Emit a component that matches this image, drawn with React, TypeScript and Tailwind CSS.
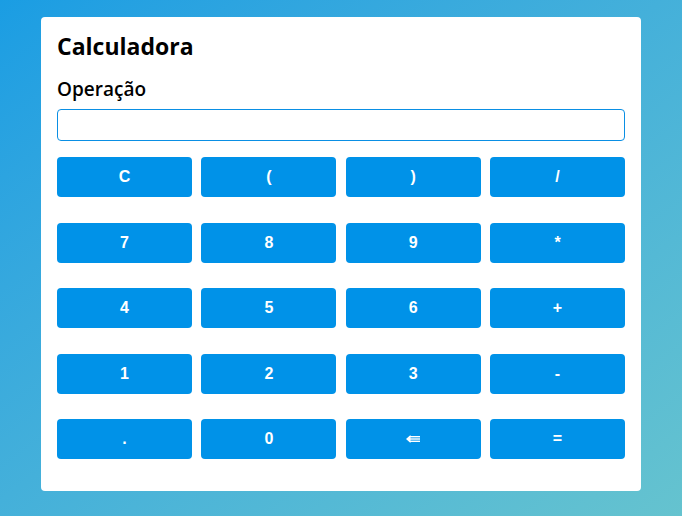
import React from "react";

const keys = ["C", "(", ")", "/", "7", "8", "9", "*", "4", "5", "6", "+", "1", "2", "3", "-", ".", "0", "⇚", "="];

export default function App() {
  return (
    <div className="min-h-screen w-full bg-linear-to-br from-[#1a9de3] to-[#65c3cf] pt-[17px]">
      <div className="mx-auto w-[600px] rounded-[4px] bg-white px-4 pt-[15px] pb-[32px]">
        <h1
          className="text-[23px] leading-[28px] font-bold text-black"
          style={{ fontFamily: '"Open Sans", "DejaVu Sans", sans-serif' }}
        >
          Calculadora
        </h1>
        <label
          className="mt-[17px] block text-[19px] leading-[24px] font-semibold text-black"
          style={{ fontFamily: '"Open Sans", "DejaVu Sans", sans-serif' }}
        >
          Operação
        </label>
        <input
          type="text"
          className="mt-[8px] block h-[32px] w-full rounded-[4px] border border-[#0a8fe4] bg-white px-2 outline-none"
        />
        <div className="mt-[16px] grid grid-cols-4 gap-x-[9.33px] gap-y-[25.5px]">
          {keys.map((k) => (
            <button
              key={k}
              className="flex h-[40px] items-center justify-center rounded-[4px] bg-[#0092e8] text-[16px] font-bold text-white"
              style={{ fontFamily: '"Liberation Sans", Arial, "DejaVu Sans", sans-serif' }}
            >
              {k === "⇚" ? (
                <svg width="14" height="8" viewBox="0 0 14 8" className="block" aria-label="⇚">
                  <polygon points="0,4 4.5,0 4.5,8" fill="white" />
                  <rect x="3.5" y="1" width="10.5" height="1.4" fill="white" />
                  <rect x="3.5" y="3.3" width="10.5" height="1.4" fill="white" />
                  <rect x="3.5" y="5.6" width="10.5" height="1.4" fill="white" />
                </svg>
              ) : (
                k
              )}
            </button>
          ))}
        </div>
      </div>
    </div>
  );
}
